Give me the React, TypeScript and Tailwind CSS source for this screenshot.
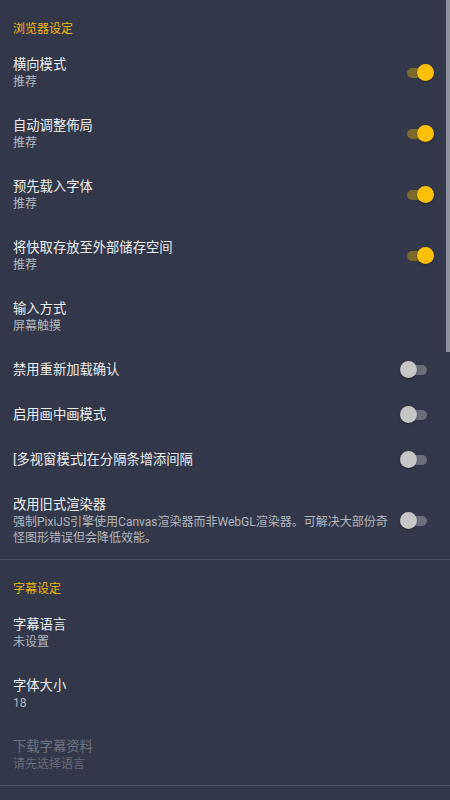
import React from "react";

type Item = {
  title: string;
  sub?: string;
  toggle?: "on" | "off";
  disabled?: boolean;
};

const Toggle = ({ on }: { on: boolean }) => (
  <div className="relative w-[34px] h-[18px] flex items-center justify-center shrink-0">
    <div className={"w-[20px] h-[10px] rounded-full " + (on ? "bg-[#7b6a2c]" : "bg-[#6a6f7e]")} />
    <div
      className={
        "absolute top-[0.5px] w-[17px] h-[17px] rounded-full shadow-[0_1px_2px_rgba(0,0,0,0.35)] " +
        (on ? "right-0 bg-[#ffc107]" : "left-0 bg-[#c6c6c6]")
      }
    />
  </div>
);

const Row = ({ item }: { item: Item }) => (
  <div
    className={
      "flex items-center pl-[13px] pr-[16px] " +
      (item.sub ? "py-[13px]" : "h-[45px]")
    }
  >
    <div className="flex-1 min-w-0 pr-[4px]">
      <div
        className={
          "text-[13.3px] leading-[19px] " +
          (item.disabled ? "text-[#6e7380]" : "text-[#eeeeee]")
        }
      >
        {item.title}
      </div>
      {item.sub && (
        <div
          className={
            "text-[12px] leading-[16px] " +
            (item.disabled ? "text-[#666b78]" : "text-[#b3b6bd]")
          }
        >
          {item.sub}
        </div>
      )}
    </div>
    {item.toggle && <Toggle on={item.toggle === "on"} />}
  </div>
);

const Header = ({ text }: { text: string }) => (
  <div className="pl-[13px] pt-[21px] pb-[5px] text-[12px] leading-[16px] text-[#f2b705]">
    {text}
  </div>
);

const browser: Item[] = [
  { title: "横向模式", sub: "推荐", toggle: "on" },
  { title: "自动调整佈局", sub: "推荐", toggle: "on" },
  { title: "预先载入字体", sub: "推荐", toggle: "on" },
  { title: "将快取存放至外部储存空间", sub: "推荐", toggle: "on" },
  { title: "输入方式", sub: "屏幕触摸" },
  { title: "禁用重新加载确认", toggle: "off" },
  { title: "启用画中画模式", toggle: "off" },
  { title: "[多视窗模式]在分隔条增添间隔", toggle: "off" },
  {
    title: "改用旧式渲染器",
    sub: "强制PixiJS引擎使用Canvas渲染器而非WebGL渲染器。可解决大部份奇怪图形错误但会降低效能。",
    toggle: "off",
  },
];

const subs: Item[] = [
  { title: "字幕语言", sub: "未设置" },
  { title: "字体大小", sub: "18" },
  { title: "下载字幕资料", sub: "请先选择语言", disabled: true },
];

export default function App() {
  return (
    <div
      className="relative w-[450px] h-[800px] overflow-hidden bg-[#323849]"
      style={{ fontFamily: "Roboto, 'Noto Sans CJK SC', sans-serif" }}
    >
      <Header text="浏览器设定" />
      {browser.map((it, i) => (
        <Row key={i} item={it} />
      ))}
      <div className="h-px bg-[#4a5061]" />
      <Header text="字幕设定" />
      {subs.map((it, i) => (
        <Row key={i} item={it} />
      ))}
      <div className="h-px bg-[#4a5061]" />
      <div className="absolute right-0 top-0 w-[4px] h-[352px] bg-[#8c919d]" />
    </div>
  );
}
